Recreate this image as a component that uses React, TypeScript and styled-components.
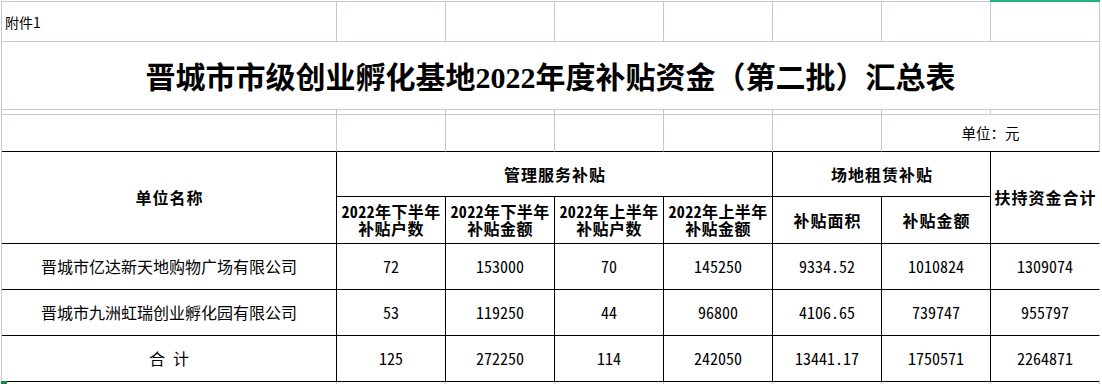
import React from "react";
import styled, { createGlobalStyle } from "styled-components";

const GRID = "#c5c9d7";
const INK = "#000000";

type Line = "grid" | "ink" | "none";
const lineColor = (l: Line) => (l === "grid" ? GRID : l === "ink" ? INK : "transparent");

const Global = createGlobalStyle`
  html, body { margin: 0; padding: 0; background: #ffffff; overflow: hidden; }
  body { font-family: "Noto Sans CJK SC", "Noto Sans", sans-serif; color: #000; }
`;

const Page = styled.div`
  position: relative;
  width: 1102px;
  height: 384px;
  overflow: hidden;
  box-sizing: border-box;
  padding: 1px 0 0 1px;
`;

const Sheet = styled.div`
  display: grid;
  grid-template-columns: 335px repeat(7, 109px);
  grid-template-rows: 40px 68px 5px 37px 45px 47px 46px 46px 46px 30px;
  width: max-content;
  border-left: 1px solid ${GRID};
  border-top: 1px solid ${GRID};
`;

const Cell = styled.div<{
  $col: string;
  $row: string;
  $right: Line;
  $bottom: Line;
  $align?: "left" | "center";
}>`
  grid-column: ${(p) => p.$col};
  grid-row: ${(p) => p.$row};
  box-sizing: border-box;
  min-width: 0;
  border-right: 1px solid ${(p) => lineColor(p.$right)};
  border-bottom: 1px solid ${(p) => lineColor(p.$bottom)};
  display: flex;
  flex-direction: column;
  align-items: ${(p) => (p.$align === "left" ? "flex-start" : "center")};
  justify-content: center;
  padding-left: ${(p) => (p.$align === "left" ? "3px" : "0")};
  text-align: center;
  white-space: nowrap;
`;

const Note = styled.span`
  font-size: 14px;
  line-height: 1;
`;

const Title = styled.h1`
  margin: 0;
  padding-top: 4px;
  font-family: "Liberation Serif", "Noto Sans CJK SC", serif;
  font-size: 30px;
  font-weight: 700;
  line-height: 1;
`;

const Unit = styled.span`
  font-size: 14.5px;
  line-height: 1;
`;

const HeadText = styled.span<{ $tight?: boolean }>`
  display: block;
  font-size: 16px;
  font-weight: 700;
  letter-spacing: ${(p) => (p.$tight ? "0.4px" : "1px")};
  padding-left: ${(p) => (p.$tight ? "0" : "1px")};
  line-height: 17px;
  height: 17px;
  font-feature-settings: "hwid" 1;
`;

const BodyText = styled.span`
  font-size: 16px;
  font-weight: 400;
  line-height: 1.2;
  font-feature-settings: "hwid" 1;
`;

const SelectionEdge = styled.div`
  position: absolute;
  left: 990px;
  top: 0;
  width: 110px;
  height: 2px;
  background: #25b477;
`;

const FillHandle = styled.div`
  position: absolute;
  left: 1px;
  top: 381px;
  width: 6px;
  height: 3px;
  background: #1c8a3a;
`;

const cols = [1, 2, 3, 4, 5, 6, 7, 8];

const subHeads: [string, string][] = [
  ["2022年下半年", "补贴户数"],
  ["2022年下半年", "补贴金额"],
  ["2022年上半年", "补贴户数"],
  ["2022年上半年", "补贴金额"],
];

const dataRows = [
  {
    name: "晋城市亿达新天地购物广场有限公司",
    values: ["72", "153000", "70", "145250", "9334.52", "1010824", "1309074"],
  },
  {
    name: "晋城市九洲虹瑞创业孵化园有限公司",
    values: ["53", "119250", "44", "96800", "4106.65", "739747", "955797"],
  },
  {
    name: "合\u3000计",
    values: ["125", "272250", "114", "242050", "13441.17", "1750571", "2264871"],
  },
];

export default function App() {
  return (
    <Page>
      <Global />
      <Sheet>
        {/* row 1 */}
        {cols.map((c) => (
          <Cell key={`r1-${c}`} $col={`${c}`} $row="1" $right="grid" $bottom="grid" $align={c === 1 ? "left" : "center"}>
            {c === 1 && <Note>附件1</Note>}
          </Cell>
        ))}

        {/* row 2: title */}
        <Cell $col="1 / 9" $row="2" $right="grid" $bottom="grid">
          <Title>晋城市市级创业孵化基地2022年度补贴资金（第二批）汇总表</Title>
        </Cell>

        {/* row 3: spacer */}
        {cols.map((c) => (
          <Cell key={`r3-${c}`} $col={`${c}`} $row="3" $right="grid" $bottom="grid" />
        ))}

        {/* row 4: unit */}
        {cols.slice(0, 6).map((c) => (
          <Cell key={`r4-${c}`} $col={`${c}`} $row="4" $right="grid" $bottom="ink" />
        ))}
        <Cell $col="7 / 9" $row="4" $right="grid" $bottom="ink">
          <Unit>单位：元</Unit>
        </Cell>

        {/* header rows */}
        <Cell $col="1" $row="5 / 7" $right="ink" $bottom="ink">
          <HeadText>单位名称</HeadText>
        </Cell>
        <Cell $col="2 / 6" $row="5" $right="ink" $bottom="ink">
          <HeadText>管理服务补贴</HeadText>
        </Cell>
        <Cell $col="6 / 8" $row="5" $right="ink" $bottom="ink">
          <HeadText>场地租赁补贴</HeadText>
        </Cell>
        <Cell $col="8" $row="5 / 7" $right="none" $bottom="ink">
          <HeadText>扶持资金合计</HeadText>
        </Cell>
        {subHeads.map(([a, b], i) => (
          <Cell key={`sh-${i}`} $col={`${i + 2}`} $row="6" $right="ink" $bottom="ink">
            <HeadText $tight>{a}</HeadText>
            <HeadText $tight>{b}</HeadText>
          </Cell>
        ))}
        <Cell $col="6" $row="6" $right="ink" $bottom="ink">
          <HeadText>补贴面积</HeadText>
        </Cell>
        <Cell $col="7" $row="6" $right="ink" $bottom="ink">
          <HeadText>补贴金额</HeadText>
        </Cell>

        {/* data rows */}
        {dataRows.map((r, ri) => (
          <React.Fragment key={`d-${ri}`}>
            <Cell $col="1" $row={`${ri + 7}`} $right="ink" $bottom="ink">
              <BodyText>{r.name}</BodyText>
            </Cell>
            {r.values.map((v, vi) => (
              <Cell
                key={`d-${ri}-${vi}`}
                $col={`${vi + 2}`}
                $row={`${ri + 7}`}
                $right={vi === 6 ? "none" : "ink"}
                $bottom="ink"
              >
                <BodyText>{v}</BodyText>
              </Cell>
            ))}
          </React.Fragment>
        ))}

        {/* row 10 */}
        {cols.map((c) => (
          <Cell key={`r10-${c}`} $col={`${c}`} $row="10" $right="grid" $bottom="grid" />
        ))}
      </Sheet>
      <SelectionEdge />
      <FillHandle />
    </Page>
  );
}
